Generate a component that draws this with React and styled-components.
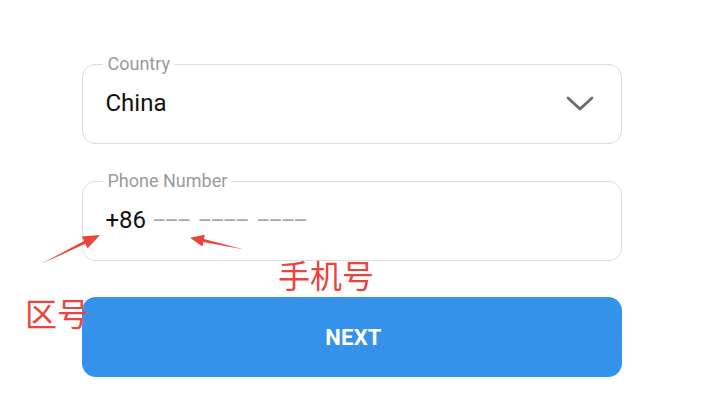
import React from "react";
import styled, { createGlobalStyle } from "styled-components";

const Global = createGlobalStyle`
  html, body { margin: 0; padding: 0; background: #fff; }
  body { font-family: Roboto, "Noto Sans", Arial, sans-serif; }
`;

const Page = styled.div`
  position: relative;
  width: 703px;
  height: 399px;
  overflow: hidden;
  background: #fff;
`;

const Form = styled.form`
  width: 540px;
  margin: 0 auto;
  padding-top: 54px;
  display: flex;
  flex-direction: column;
`;

const Field = styled.fieldset`
  margin: 0 0 ${(p) => p.$gap}px 0;
  padding: 0 20px 0 20px;
  min-width: 0;
  border: 1px solid #dedede;
  border-radius: 13px;
`;

const Legend = styled.legend`
  padding: 0 4px 0 5px;
  font-size: 18px;
  line-height: 20px;
  color: #9a9a9a;
`;

const Row = styled.div`
  height: 58px;
  padding-bottom: 11px;
  display: flex;
  align-items: center;
  justify-content: space-between;
  font-size: 24px;
  color: #111;
`;

const Value = styled.span`
  padding-left: 3px;
`;

const Placeholder = styled.span`
  color: #a8a8a8;
  margin-left: 6px;
  font-size: 22px;
  letter-spacing: -2px;
  word-spacing: 5px;
`;

const Chevron = styled.svg`
  width: 28px;
  height: 16px;
  margin-right: 7px;
  margin-top: 1px;
`;

const Button = styled.button`
  height: 80px;
  border: none;
  border-radius: 14px;
  padding: 0 0 0 4px;
  background: #3592eb;
  color: #fff;
  font-family: Roboto, Arial, sans-serif;
  font-weight: 700;
  font-size: 22px;
  letter-spacing: 0.2px;
  cursor: pointer;
`;

const Overlay = styled.svg`
  position: absolute;
  left: 0;
  top: 0;
  width: 703px;
  height: 399px;
  pointer-events: none;
`;

const Note = styled.span`
  position: absolute;
  left: ${(p) => p.$x}px;
  top: ${(p) => p.$y}px;
  font-family: "Noto Sans CJK SC", "Noto Sans", sans-serif;
  font-size: 32px;
  line-height: 1;
  color: #e8453c;
  pointer-events: none;
`;

export default function App() {
  return (
    <Page>
      <Global />
      <Form onSubmit={(e) => e.preventDefault()}>
        <Field $gap={27}>
          <Legend>Country</Legend>
          <Row>
            <Value>China</Value>
            <Chevron viewBox="0 0 28 16">
              <path d="M2 2 L14 13 L26 2" fill="none" stroke="#6b6b6b" strokeWidth="2.8" strokeLinecap="round" strokeLinejoin="round" />
            </Chevron>
          </Row>
        </Field>
        <Field $gap={36}>
          <Legend>Phone Number</Legend>
          <Row>
            <span>
              <Value>+86</Value>
              <Placeholder>––– –––– ––––</Placeholder>
            </span>
          </Row>
        </Field>
        <Button type="submit">NEXT</Button>
      </Form>
      <Overlay viewBox="0 0 703 399">
        <path d="M41 264 L83.9 241 L82 236.5 L100 235 L87.6 248.4 L85.3 243.8 Z" fill="#e8453c" />
        <path d="M244 249.5 L204 239.1 L204.8 234.8 L190 237.7 L202.4 246.5 L203.4 242.1 Z" fill="#e8453c" />
      </Overlay>
      <Note $x={25} $y={296}>区号</Note>
      <Note $x={278} $y={258}>手机号</Note>
    </Page>
  );
}
